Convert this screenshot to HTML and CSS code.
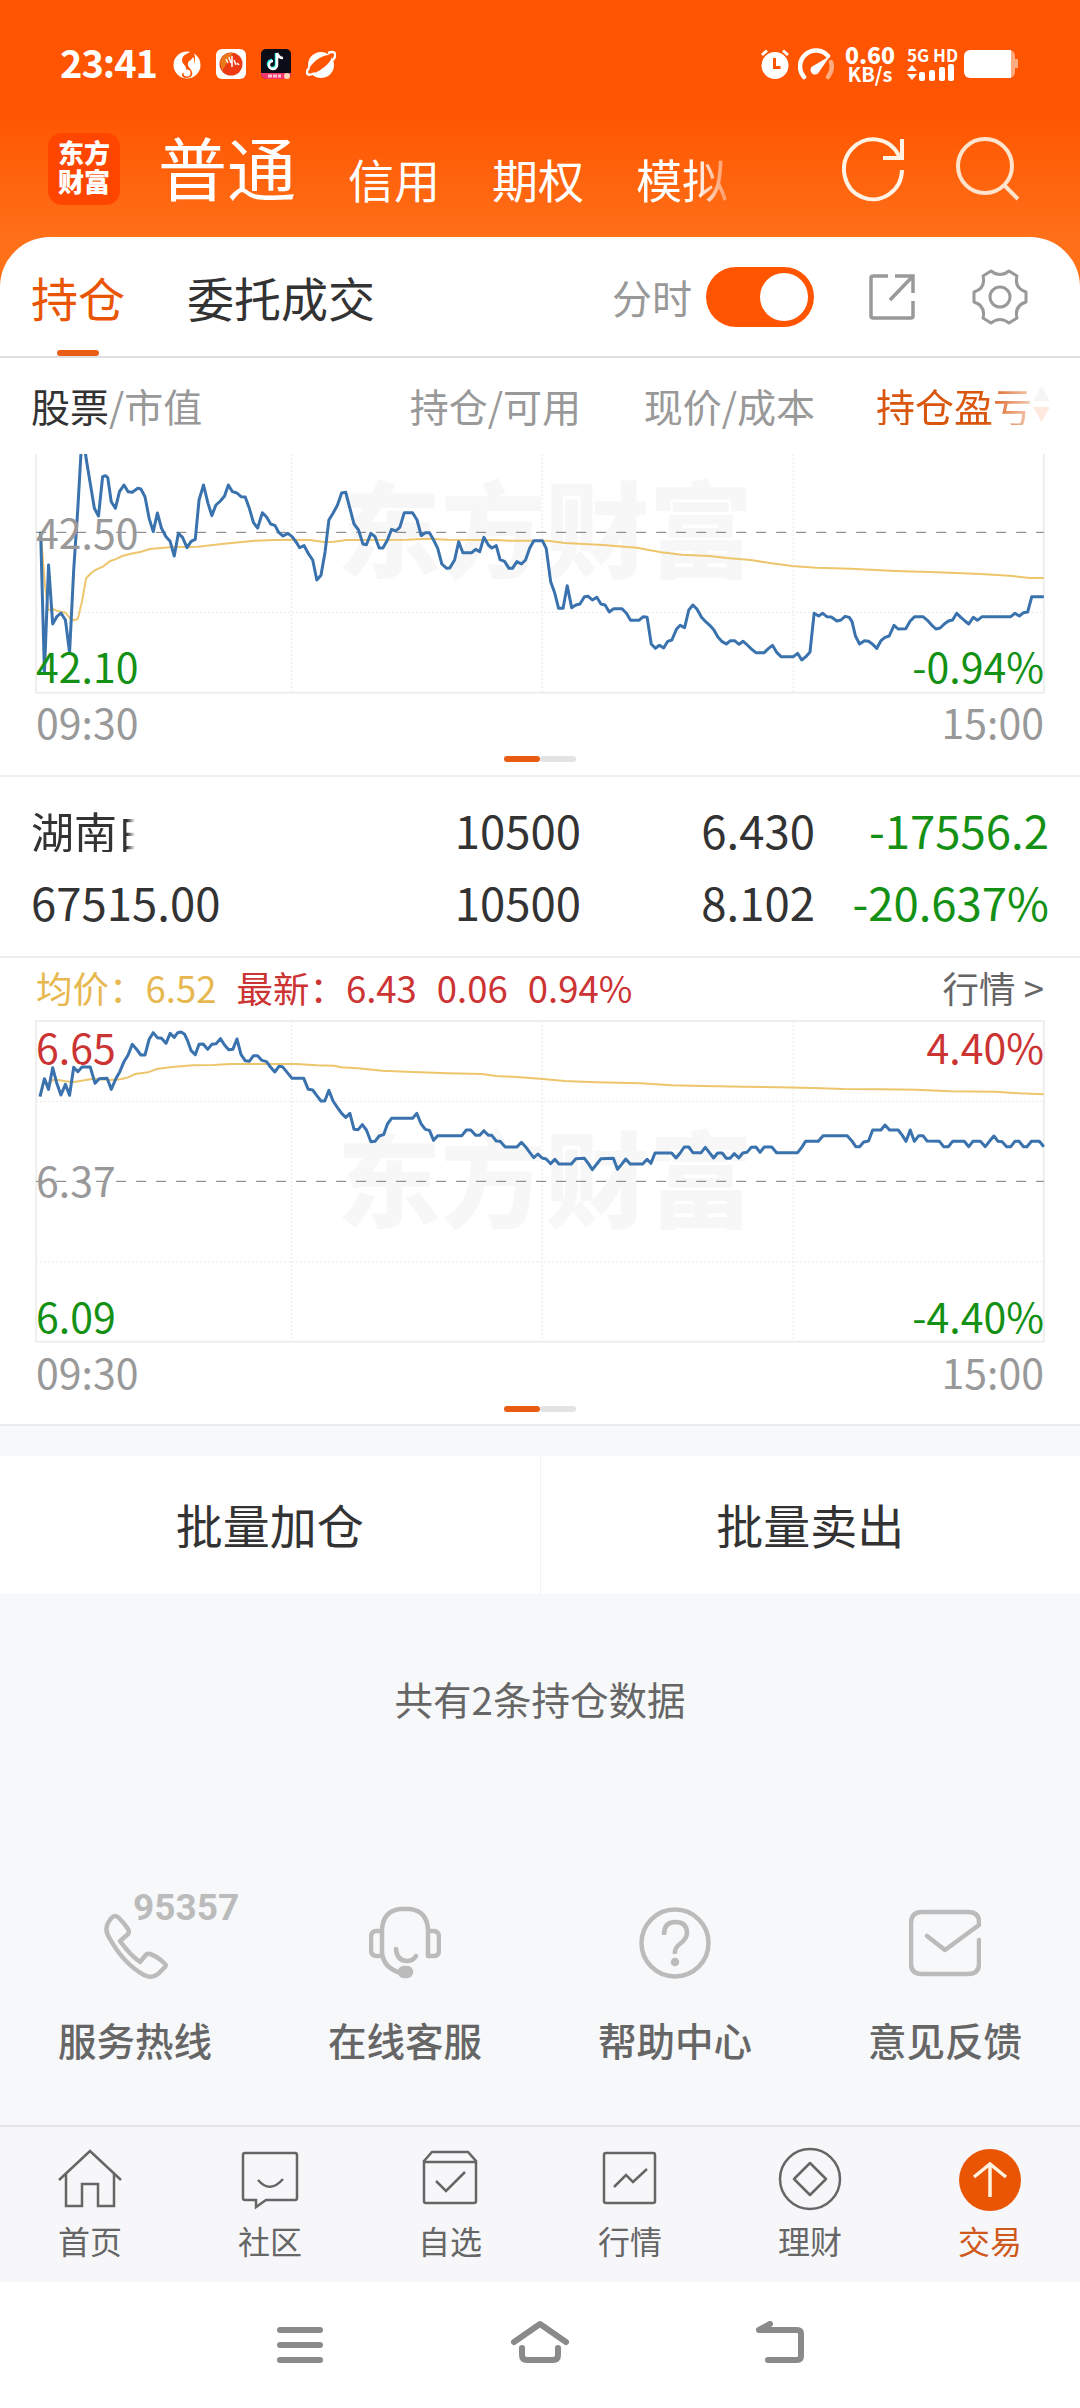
FILE: index.html
```html
<!DOCTYPE html>
<html lang="zh-CN">

<head>
    <meta charset="UTF-8">
    <meta name="viewport" content="width=device-width, initial-scale=1.0">
    <title>东方财富 - 持仓</title>
    <link rel="stylesheet" href="styles.css">
</head>

<body>

    <header>
        <div class="status">
            <span class="time">23:41</span>
            <svg class="app" width="28" height="30" viewBox="0 0 28 30">
                <circle cx="14" cy="16" r="13.500" fill="#fff"/>
                <path d="M20 2C15 4 9 6 9 11c0 5 5 5 4 10-1 3-4 2-4 5 0 2 2 3 4 3 5 0 7-3 6-6-1-4-5-5-4-9 0-2 4-3 5-6 2 2 1 4 1 7 2-5 1-9-1-13Z" fill="#ff5500"/>
                <circle cx="14" cy="24" r="3.500" fill="#fff"/>
            </svg>
            <svg class="app" width="30" height="30" viewBox="0 0 30 30">
                <rect width="30" height="30" rx="6" fill="#fff"/>
                <circle cx="15" cy="15" r="11.500" fill="#ee3a12"/>
                <path d="M4 12a11.500 11.500 0 0 1 13-8L6 22Z" fill="#e87a1c"/>
                <path d="M10 10l2 4M13 8l2 6M16 7v11M18 11l2 5M21 14l2 2" stroke="#fff" stroke-width="1.500"/>
            </svg>
            <svg class="app" width="30" height="30" viewBox="0 0 30 30">
                <rect width="30" height="30" rx="5" fill="#0c0b18"/>
                <path d="M0 24h30v1a5 5 0 0 1-5 5H5a5 5 0 0 1-5-5Z" fill="#f0386b"/>
                <path d="M15 4v11a4 4 0 1 1-4-4" fill="none" stroke="#25f4ee" stroke-width="2.500"/>
                <path d="M16 4v12a4 4 0 1 1-4-4M16 4c1 3 3 5 6 5" fill="none" stroke="#fff" stroke-width="2.500"/>
                <circle cx="26" cy="27" r="3" fill="#ffd9b8"/>
                <path d="M7 27h13" stroke="#ffc2d0" stroke-width="3" stroke-dasharray="4 1"/>
            </svg>
            <svg class="app" width="30" height="30" viewBox="0 0 30 30">
                <circle cx="15" cy="16" r="13" fill="#fff"/>
                <path d="M2 22C5 13 17 5 25 6c4 5-12 18-20 19Z" fill="#ff5500"/>
                <path d="M3 19c-4 5-2 9 6 5M22 4c8-3 9 2 5 7" fill="none" stroke="#fff" stroke-width="2.500"/>
            </svg>

            <svg class="alarm" width="30" height="32" viewBox="0 0 30 32">
                <circle cx="15" cy="17.500" r="13.500" fill="#fff"/>
                <path d="M2 7l5-4.500M28 7l-5-4.500" stroke="#fff" stroke-width="3"/>
                <path d="M14.500 10v9.500h6" fill="none" stroke="#f50" stroke-width="3"/>
            </svg>
            <svg class="gauge" width="36" height="32" viewBox="0 0 36 32">
                <path d="M6 29A15.500 15.500 0 0 1 30 8" fill="none" stroke="#fff" stroke-width="4.500" stroke-linecap="round"/>
                <path d="M33 14c2 6 0 11-3 15" fill="none" stroke="#ffab80" stroke-width="4.500" stroke-linecap="round"/>
                <path d="M32 8L15 18a4.500 4.500 0 1 0 6 6Z" fill="#fff"/>
            </svg>
            <div class="speed"><b>0.60</b><span>KB/s</span></div>
            <div class="network">
                <span>5G HD</span>
                <svg width="48" height="17" viewBox="0 0 48 17" fill="#fff">
                    <path d="M0 7l5-6 5 6ZM0 10h10l-5 6Z"/>
                    <rect x="12" y="8" width="6" height="9" rx="2"/>
                    <rect x="22" y="6" width="6" height="11" rx="2"/>
                    <rect x="32" y="3" width="6" height="14" rx="2"/>
                    <rect x="41" y="0" width="6" height="17" rx="2"/>
                </svg>
            </div>
            <svg width="54" height="28" viewBox="0 0 54 28">
                <path d="M40 0h5a6 6 0 0 1 6 6v3h3v9h-3v4a6 6 0 0 1-6 6h-5Z" fill="#ffab80"/>
                <path d="M6 0h41v28H6a6 6 0 0 1-6-6V6a6 6 0 0 1 6-6Z" fill="#fff"/>
            </svg>
        </div>

        <div class="top-nav">
            <div class="logo">东方<br>财富</div>
            <a class="active">普通</a>
            <a>信用</a>
            <a>期权</a>
            <a class="fade">模拟</a>
            <svg class="refresh" width="64" height="66" viewBox="0 0 64 66" fill="none" stroke="#fff3e6" stroke-width="4">
                <path d="M60 34A29 30 0 1 1 57 20M60 3v19H41"/>
            </svg>
            <svg width="64" height="66" viewBox="0 0 64 66" fill="none" stroke="#ffe3cc" stroke-width="4">
                <circle cx="30" cy="30" r="27"/>
                <path d="M49 49l14 14"/>
            </svg>
        </div>
    </header>

    <main>
        <div class="tabs">
            <a class="current">持仓</a>
            <a>委托成交</a>
            <span class="switch-label">分时</span>
            <span class="switch"></span>
            <svg class="share" width="48" height="50" viewBox="0 0 48 50" fill="none" stroke="#999" stroke-width="3.500">
                <path d="M20 4H5a2 2 0 0 0-2 2v38a2 2 0 0 0 2 2h38a2 2 0 0 0 2-2V29M27 4h18v17M45 4L22 28"/>
            </svg>
            <svg width="56" height="56" viewBox="0 0 56 56" fill="none" stroke="#999" stroke-width="3">
                <path d="M19 2Q28 9 37 2L45 7Q42 19 54 23V33Q42 37 45 49L37 54Q28 47 19 54L11 49Q14 37 2 33V23Q14 19 11 7Z" stroke-linejoin="round"/>
                <circle cx="28" cy="28" r="10"/>
            </svg>
        </div>

        <div class="row titles">
            <span class="name"><b>股票</b>/市值</span>
            <span>持仓/可用</span>
            <span>现价/成本</span>
            <span class="sort">持仓盈亏
                <svg width="17" height="36" viewBox="0 0 17 36"><path d="M0 15L8.500 0 17 15Z" fill="#f5f5f5"/><path d="M0 21h17L8.500 36Z" fill="#ffe9df"/></svg>
            </span>
        </div>

        <div class="chart chart-top">
            <span class="watermark">东方财富</span>
            <svg viewBox="0 42 3136 720" preserveAspectRatio="none">
                <path class="grid" d="M846 42V758M1574 42V758M2303 42V758M105 517H3031"/>
                <path class="frame" d="M105 42V758H3031V42"/>
                <path class="middle" d="M105 277H3031"/>
                <polyline class="average" points="118,275 124,350 130,430 140,510 155,508 170,514 190,518 204,535 215,541 226,536 238,485 250,415 262,402 275,391 300,379 320,363 335,358 355,348 380,341 410,335 435,327 500,321 575,320 650,311 740,302 800,300 845,299 900,300 940,306 970,305 1005,300 1180,299 1240,296 1300,299 1440,300 1480,302 1590,302 1640,309 1750,315 1850,323 1880,329 1920,337 1980,344 2060,348 2110,354 2180,360 2240,370 2300,378 2370,383 2470,386 2600,393 2720,397 2850,402 2940,408 2990,414 3031,414"/>
                <polyline class="price" points="118,275 129,698 141,375 153,552 165,530 177,519 190,540 202,638 214,390 226,205 235,42 238,20 246,20 250,55 262,130 274,205 286,228 298,110 306,107 313,113 323,185 335,205 347,155 360,135 372,155 384,157 400,145 409,147 421,170 433,235 445,275 457,219 469,265 482,290 494,304 506,348 518,280 530,292 543,323 555,304 567,298 578,180 591,135 604,190 615,227 627,195 640,183 652,168 663,135 675,155 688,159 700,170 712,171 724,205 736,248 748,264 762,218 774,231 786,252 798,256 810,278 822,288 836,280 848,290 860,306 870,323 883,317 895,340 908,360 920,420 932,406 944,335 955,240 967,220 980,195 992,159 1004,157 1016,205 1028,252 1041,270 1054,312 1064,314 1077,280 1089,290 1101,324 1112,324 1125,300 1137,268 1149,273 1161,262 1174,218 1198,218 1211,240 1223,287 1235,278 1247,278 1259,300 1271,325 1283,372 1297,385 1306,384 1320,360 1332,305 1344,338 1370,338 1381,328 1393,335 1405,292 1418,315 1428,324 1441,317 1452,359 1465,364 1478,385 1488,385 1501,365 1514,372 1526,360 1538,325 1550,302 1575,302 1586,325 1599,425 1611,460 1622,505 1635,505 1647,437 1660,503 1672,495 1684,492 1697,470 1708,469 1720,480 1733,472 1745,492 1757,495 1769,516 1782,506 1806,506 1819,520 1831,541 1855,541 1868,530 1879,532 1891,612 1903,625 1915,616 1927,624 1939,604 1951,600 1964,568 1975,556 1988,563 2000,510 2012,495 2024,508 2037,532 2049,545 2061,556 2073,570 2085,592 2097,605 2109,612 2121,602 2133,602 2146,613 2158,604 2170,615 2183,628 2195,638 2219,638 2231,626 2243,616 2256,638 2268,650 2304,650 2316,640 2328,660 2340,650 2352,636 2364,520 2377,528 2389,520 2401,530 2414,531 2430,543 2442,540 2454,529 2466,532 2474,545 2484,588 2496,612 2510,602 2522,604 2534,613 2546,625 2558,602 2570,592 2582,588 2596,556 2608,567 2630,566 2643,543 2656,530 2680,530 2694,542 2706,556 2718,567 2730,564 2742,552 2754,543 2766,540 2778,520 2790,532 2802,543 2813,552 2826,532 2838,541 2852,530 2935,530 2947,520 2960,528 2972,518 2984,516 2996,470 3031,470"/>
            </svg>
            <span class="tag mid">42.50</span>
            <span class="tag low down">42.10</span>
            <span class="tag low right down">-0.94%</span>
        </div>
        <div class="hours"><span>09:30</span><span>15:00</span></div>
        <div class="pager"><i></i><i></i></div>

        <div class="holding">
            <div class="row">
                <span class="name clipped">湖南白</span>
                <span>10500</span>
                <span>6.430</span>
                <span class="down">-17556.2</span>
            </div>
            <div class="row">
                <span class="name">67515.00</span>
                <span>10500</span>
                <span>8.102</span>
                <span class="down">-20.637%</span>
            </div>
        </div>

        <div class="quote">
            <span class="avg">均价：6.52</span>
            <span class="up">最新：6.43</span>
            <span class="up">0.06</span>
            <span class="up">0.94%</span>
            <a>行情 &gt;</a>
        </div>
        <div class="chart chart-full">
            <span class="watermark">东方财富</span>
            <svg viewBox="0 60 3136 972" preserveAspectRatio="none">
                <path class="grid" d="M846 63V1025M1574 63V1025M2303 63V1025M105 304H3031M105 785H3031"/>
                <path class="frame" d="M105 63V1025H3031V63Z"/>
                <path class="middle" d="M105 544H3031"/>
                <polyline class="average" points="118,288 128,240 140,255 153,240 170,240 190,244 215,246 245,241 270,236 320,240 350,238 370,233 393,222 430,217 455,207 500,201 560,196 620,195 670,192 860,192 920,196 970,197 990,202 1040,205 1110,212 1180,215 1300,220 1400,222 1440,228 1500,231 1568,236 1640,243 1730,247 1860,250 1950,256 2040,258 2160,260 2260,262 2360,264 2450,267 2560,268 2660,269 2760,274 2890,275 2960,280 3031,283"/>
                <polyline class="price" points="116,290 129,236 141,268 153,203 165,250 177,285 190,253 202,286 214,202 226,215 238,201 262,201 276,250 288,236 311,235 323,268 337,235 348,215 360,185 372,165 384,133 396,147 409,165 421,165 433,118 445,98 457,113 469,115 482,130 494,100 506,112 516,98 526,96 536,103 544,120 555,152 567,164 578,133 590,132 603,148 615,133 628,131 640,116 652,135 664,149 676,148 688,117 700,164 712,182 724,184 736,167 748,167 760,181 774,185 786,202 798,216 810,199 820,200 832,215 848,235 882,235 895,268 908,270 920,287 932,303 943,303 955,271 967,303 980,323 992,340 1004,352 1016,340 1028,388 1040,389 1052,374 1064,390 1077,425 1089,424 1101,408 1114,404 1125,372 1137,355 1198,355 1210,340 1223,372 1235,388 1247,391 1259,421 1271,407 1341,407 1354,390 1367,390 1381,406 1393,406 1405,392 1418,406 1428,406 1441,423 1452,424 1467,441 1501,441 1514,427 1526,440 1538,457 1550,473 1562,462 1574,474 1586,477 1599,491 1611,478 1623,492 1659,492 1672,476 1697,475 1708,490 1720,509 1733,492 1745,476 1781,475 1793,508 1805,493 1817,477 1830,492 1866,492 1879,478 1890,490 1902,459 1950,459 1963,474 1975,459 1987,441 2000,441 2012,458 2036,458 2048,442 2060,458 2072,474 2084,459 2097,459 2109,475 2120,475 2132,461 2145,474 2157,459 2169,457 2181,442 2195,441 2207,457 2219,441 2241,441 2255,458 2316,458 2328,442 2339,424 2376,424 2390,407 2460,407 2473,422 2485,440 2496,440 2508,426 2522,423 2534,390 2558,390 2570,375 2583,390 2608,390 2620,406 2631,424 2643,390 2655,424 2668,407 2680,407 2692,423 2728,424 2740,440 2754,440 2766,424 2800,424 2813,440 2825,424 2847,424 2861,440 2873,424 2886,408 2898,424 2910,425 2923,440 2935,440 2947,424 2959,424 2972,440 2982,440 2995,424 3018,424 3031,440"/>
            </svg>
            <span class="tag high up">6.65</span>
            <span class="tag high right up">4.40%</span>
            <span class="tag mid">6.37</span>
            <span class="tag low down">6.09</span>
            <span class="tag low right down">-4.40%</span>
        </div>
        <div class="hours"><span>09:30</span><span>15:00</span></div>
        <div class="pager"><i></i><i></i></div>
    </main>

    <div class="batch">
        <a>批量加仓</a>
        <a>批量卖出</a>
    </div>

    <p class="total">共有2条持仓数据</p>

    <div class="services">
        <a>
            <svg width="72" height="76" viewBox="0 0 72 76">
                <path d="M16 12q-3 0-7 7-4 7 2 16 14 25 34 36 8 4 14-1l7-7q2-2-1-4-7-7-14-9-3-1-5 2l-5 6Q31 51 21 37l7-6q3-2 1-6-4-6-9-11-2-2-4-2Z"/>
            </svg>
            <span class="hotline">95357</span>
            服务热线
        </a>
        <a>
            <svg width="72" height="76" viewBox="0 0 72 76">
                <path d="M13 28V48Q14 64 32 69M13 28Q13 7 31 5H41Q59 7 59 28V52H65Q70 52 70 46V33Q70 27 64 27H59M13 27H8Q2 27 2 33V46Q2 52 8 52H13M27 45Q28 57 38 57 44 57 47 52"/>
                <rect x="31" y="64" width="11" height="8" rx="4" fill="#bbb"/>
            </svg>
            在线客服
        </a>
        <a>
            <svg width="72" height="76" viewBox="0 0 72 76">
                <circle cx="36" cy="39" r="33.500"/>
                <path d="M25 31Q25 18 36 18 48 18 48 29 48 34 42 39 35 44 36 50" stroke-linecap="butt"/>
                <circle cx="36" cy="58" r="2"/>
            </svg>
            帮助中心
        </a>
        <a>
            <svg width="72" height="76" viewBox="0 0 72 76">
                <path d="M70 36V60Q70 70 59 70H13Q2 70 2 60V19Q2 8 13 8H59Q70 8 70 18V21L36 46 18 32"/>
            </svg>
            意见反馈
        </a>
    </div>

    <nav class="tab-bar">
        <a>
            <svg width="66" height="66" viewBox="0 0 66 66">
                <path d="M2 33L33 4 64 33M9 27V59H25V37H41V59H57V27"/>
            </svg>
            首页
        </a>
        <a>
            <svg width="66" height="66" viewBox="0 0 66 66">
                <path d="M8 6H58Q60 6 60 8V51Q60 53 58 53H29L19 60V53H8Q6 53 6 51V8Q6 6 8 6ZM21 33Q33 47 46 32"/>
            </svg>
            社区
        </a>
        <a>
            <svg width="66" height="66" viewBox="0 0 66 66">
                <path d="M7 14L15 5H51L59 14V54Q59 56 57 56H9Q7 56 7 54ZM7 15H59M19 34L29 44 48 25"/>
            </svg>
            自选
        </a>
        <a>
            <svg width="66" height="66" viewBox="0 0 66 66">
                <rect x="7" y="6" width="51" height="50" rx="2"/>
                <path d="M17 40L29 28 36 35 50 22"/>
            </svg>
            行情
        </a>
        <a>
            <svg width="66" height="66" viewBox="0 0 66 66">
                <circle cx="33" cy="32" r="30"/>
                <path d="M33 16L49 32 33 48 17 32Z" stroke-linejoin="round"/>
            </svg>
            理财
        </a>
        <a class="selected">
            <svg width="66" height="66" viewBox="0 0 66 66">
                <circle cx="33" cy="33" r="31" fill="#ea5504" stroke="none"/>
                <path d="M33 50V18M17 30L33 17 49 30" stroke="#fff3e0" stroke-width="3.500"/>
            </svg>
            交易
        </a>
    </nav>

    <footer>
        <svg width="60" height="50" viewBox="0 0 60 50"><path d="M10 9H50M10 24H50M10 39H50"/></svg>
        <svg width="60" height="50" viewBox="0 0 60 50"><path d="M4 21L30 3 56 21M12 27V34Q12 39 17 39H43Q48 39 48 34V27"/></svg>
        <svg width="60" height="50" viewBox="0 0 60 50"><path d="M20 3L9 9H47Q51 9 51 13V35Q51 39 47 39H18"/></svg>
    </footer>

</body>

</html>
```
FILE: styles.css
```css
* {
    box-sizing: border-box;
}

body {
    margin: 0;
    width: 1080px;
    height: 2408px;
    overflow: hidden;
    font-family: "Noto Sans CJK SC", "Noto Sans", sans-serif;
    background-color: #f7f8fa;
    color: #333;
    font-size: 38px;
    line-height: 1;
}

svg {
    display: block;
    flex: none;
}

header {
    height: 290px;
    background: linear-gradient(#ff5500 110px, #ff7019 240px);
    color: #fff;
}

.status {
    display: flex;
    align-items: center;
    height: 118px;
    padding: 10px 60px 0;
}

.status .time {
    width: 95px;
    margin-right: 18px;
    padding-bottom: 4px;
    font-size: 38px;
    font-weight: 700;
    letter-spacing: -1px;
}

.status .app {
    margin-right: 15px;
}

.status .alarm {
    margin-left: 409px;
    margin-right: 8px;
}

.speed {
    width: 62px;
    margin: 0 6px 0 5px;
    font-size: 20px;
    line-height: 20px;
    text-align: center;
    font-weight: 700;
}

.speed b {
    display: block;
    font-size: 23px;
    line-height: 20px;
}

.network {
    width: 48px;
    margin-right: 9px;
    font-size: 17px;
    font-weight: 700;
    line-height: 15px;
    white-space: nowrap;
}

.network svg {
    margin-top: 2px;
}

.top-nav {
    display: flex;
    align-items: flex-end;
    height: 87px;
    padding-left: 48px;
}

.logo {
    width: 72px;
    height: 72px;
    margin-right: 38px;
    padding-top: 4px;
    border-radius: 14px;
    background-color: #ff4600;
    font-size: 26px;
    font-weight: 900;
    line-height: 29px;
    text-align: center;
}

.top-nav a {
    padding-bottom: 4px;
    margin-right: 52px;
    font-size: 46px;
}

.top-nav .active {
    font-size: 69px;
}

.top-nav .fade {
    margin-right: 114px;
    -webkit-mask-image: linear-gradient(to right, #000 65%, rgba(0, 0, 0, 0.3));
    mask-image: linear-gradient(to right, #000 65%, rgba(0, 0, 0, 0.3));
}

.top-nav svg {
    margin-bottom: 3px;
}

.refresh {
    margin-right: 49px;
}

main {
    height: 1189px;
    margin-top: -53px;
    border-bottom: 2px solid #e9eaec;
    border-radius: 50px 50px 0 0;
    background-color: #fff;
}

.tabs {
    display: flex;
    align-items: center;
    height: 121px;
    padding: 0 50px 0 31px;
    border-bottom: 2px solid #e0e0e0;
}

.tabs a {
    margin-right: 62px;
    font-size: 47px;
    line-height: 117px;
}

.tabs .current {
    position: relative;
    color: #ea5504;
}

.tabs .current::after {
    content: "";
    position: absolute;
    left: 26px;
    bottom: -1px;
    width: 42px;
    height: 6px;
    border-radius: 3px;
    background-color: #e95d14;
}

.switch-label {
    margin-left: 175px;
    margin-right: 14px;
    font-size: 40px;
    color: #999;
}

.switch {
    width: 108px;
    height: 60px;
    padding: 6px;
    border-radius: 30px;
    background-color: #ff5500;
}

.switch::after {
    content: "";
    display: block;
    width: 48px;
    height: 48px;
    margin-left: 48px;
    border-radius: 50%;
    background-color: #fff;
}

.share {
    margin-left: 54px;
    margin-right: 56px;
}

.row {
    display: grid;
    grid-template-columns: 250px 300px 234px 234px;
    align-items: center;
    padding-left: 31px;
    text-align: right;
}

.row .name {
    text-align: left;
}

.titles {
    height: 96px;
    padding-bottom: 2px;
    font-size: 39px;
    color: #999;
}

.titles b {
    font-weight: 400;
    color: #333;
}

.sort {
    display: flex;
    gap: 1px;
    margin-left: 61px;
    color: #d9560e;
    white-space: nowrap;
    -webkit-mask-image: linear-gradient(to right, #000 110px, rgba(0, 0, 0, 0.3) 155px, #000 156px);
    mask-image: linear-gradient(to right, #000 110px, rgba(0, 0, 0, 0.3) 155px, #000 156px);
}

.chart {
    position: relative;
}

.chart svg {
    position: relative;
    width: 1080px;
    height: 100%;
}

.chart-top {
    height: 240px;
}

.chart-full {
    height: 324px;
}

.chart path,
.chart polyline {
    fill: none;
    vector-effect: non-scaling-stroke;
}

.chart .grid {
    stroke: #e8e8e8;
    stroke-width: 1;
    stroke-dasharray: 2 2;
}

.chart .frame {
    stroke: #eee;
    stroke-width: 2;
}

.chart .middle {
    stroke: #777;
    stroke-width: 1;
    stroke-dasharray: 10 10;
}

.chart .average {
    stroke: #edc56c;
    stroke-width: 2;
}

.chart .price {
    stroke: #3a72ad;
    stroke-width: 3;
    stroke-linejoin: round;
}

.watermark {
    position: absolute;
    left: 337px;
    bottom: 117px;
    font-size: 104px;
    font-weight: 900;
    color: #f7f7f7;
    white-space: nowrap;
}

.tag {
    position: absolute;
    left: 36px;
    font-size: 41px;
    color: #999;
}

.tag.right {
    left: auto;
    right: 36px;
}

.tag.high {
    top: 6px;
}

.tag.mid {
    top: 139px;
}

.chart-top .tag.mid {
    top: 57px;
}

.tag.low {
    bottom: 8px;
}

.up,
.tag.up {
    color: #cc3333;
}

.down,
.tag.down {
    color: #149114;
}

.hours {
    display: flex;
    justify-content: space-between;
    height: 62px;
    padding: 7px 36px 0;
    font-size: 41px;
    color: #999;
}

.pager {
    display: flex;
    justify-content: center;
}

.pager i {
    width: 36px;
    height: 6px;
    border-radius: 3px;
    background-color: #e3e3e3;
}

.pager i:first-child {
    background-color: #ea5b12;
}

.holding {
    height: 183px;
    margin-top: 13px;
    padding-top: 17px;
    border-top: 2px solid #eee;
    border-bottom: 2px solid #eee;
    font-size: 45.500px;
}

.holding .row {
    height: 72px;
}

.holding .clipped {
    width: 106px;
    overflow: hidden;
    font-size: 43px;
    white-space: nowrap;
    -webkit-mask-image: linear-gradient(to right, #000 96px, transparent 104px);
    mask-image: linear-gradient(to right, #000 96px, transparent 104px);
}

.quote {
    display: flex;
    align-items: center;
    gap: 20px;
    height: 62px;
    padding: 0 36px 2px;
    font-size: 36.500px;
}

.quote .avg {
    color: #e6b84f;
}

.quote a {
    margin-left: auto;
    color: #666;
}

.batch {
    display: flex;
    height: 138px;
    margin-top: 30px;
    background-color: #fff;
}

.batch a {
    flex: 1;
    font-size: 47px;
    line-height: 136px;
    text-align: center;
}

.batch a + a {
    border-left: 1px solid #f3f3f3;
}

.total {
    margin: 0;
    padding-top: 85px;
    height: 310px;
    font-size: 38.500px;
    color: #666;
    text-align: center;
}

.services {
    display: flex;
    height: 221px;
}

.services a {
    position: relative;
    flex: 1;
    font-size: 38.500px;
    font-weight: 500;
    color: #666;
    text-align: center;
}

.services svg {
    margin: 0 auto 40px;
    fill: none;
    stroke: #bbb;
    stroke-width: 4.500;
    stroke-linecap: round;
    stroke-linejoin: round;
}

.hotline {
    position: absolute;
    left: 133px;
    top: -15px;
    font-family: "Roboto", sans-serif;
    font-size: 37px;
    font-weight: 700;
    color: #bbb;
}

.tab-bar {
    display: flex;
    height: 157px;
    padding-top: 20px;
    border-top: 2px solid #e3e3e5;
    background-color: #f7f7f9;
}

.tab-bar a {
    flex: 1;
    font-size: 32px;
    color: #666;
    text-align: center;
}

.tab-bar svg {
    margin: 0 auto 11px;
    fill: none;
    stroke: #666;
    stroke-width: 2.500;
}

.tab-bar .selected {
    color: #cf591c;
}

footer {
    display: flex;
    justify-content: center;
    gap: 180px;
    height: 126px;
    padding-top: 39px;
    background-color: #fff;
}

footer svg {
    fill: none;
    stroke: #8a8a8a;
    stroke-width: 6;
    stroke-linecap: round;
    stroke-linejoin: round;
}
```
